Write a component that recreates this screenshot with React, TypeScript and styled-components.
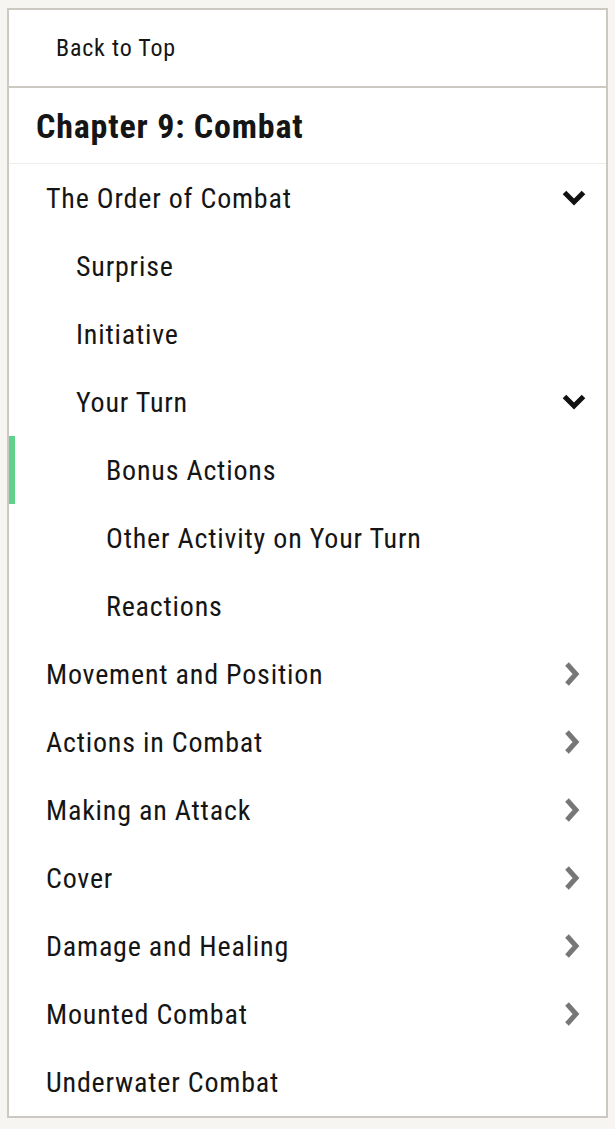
import styled, { createGlobalStyle } from 'styled-components'

const GlobalStyle = createGlobalStyle`
  html, body {
    margin: 0;
    padding: 0;
    background: #f7f5f1;
  }
  body {
    font-family: Roboto, "Liberation Sans", sans-serif;
    font-stretch: condensed;
    letter-spacing: 0.8px;
    color: #151515;
  }
`

type Item = {
  label: string
  level: number
  icon?: 'open' | 'closed'
  active?: boolean
}

const items: Item[] = [
  { label: 'The Order of Combat', level: 1, icon: 'open' },
  { label: 'Surprise', level: 2 },
  { label: 'Initiative', level: 2 },
  { label: 'Your Turn', level: 2, icon: 'open' },
  { label: 'Bonus Actions', level: 3, active: true },
  { label: 'Other Activity on Your Turn', level: 3 },
  { label: 'Reactions', level: 3 },
  { label: 'Movement and Position', level: 1, icon: 'closed' },
  { label: 'Actions in Combat', level: 1, icon: 'closed' },
  { label: 'Making an Attack', level: 1, icon: 'closed' },
  { label: 'Cover', level: 1, icon: 'closed' },
  { label: 'Damage and Healing', level: 1, icon: 'closed' },
  { label: 'Mounted Combat', level: 1, icon: 'closed' },
  { label: 'Underwater Combat', level: 1 },
]

const Page = styled.div`
  padding: 8px 7px 9px 7px;
`

const Panel = styled.nav`
  width: 597px;
  background: #fff;
  border: 2px solid #ccc8c2;
  display: flex;
  flex-direction: column;
`

const BackToTop = styled.a`
  display: flex;
  align-items: center;
  height: 76px;
  padding-left: 47px;
  font-size: 24px;
  color: #151515;
  text-decoration: none;
  border-bottom: 2px solid #ccc8c2;
`

const Heading = styled.h2`
  margin: 0 0 0 1px;
  height: 75px;
  display: flex;
  align-items: center;
  padding-left: 26px;
  font-size: 34px;
  font-weight: 700;
  letter-spacing: 0.8px;
  border-bottom: 1px solid #f0eeeb;
`

const List = styled.ul`
  list-style: none;
  margin: 0;
  padding: 0;
`

const Row = styled.li<{ $level: number; $active?: boolean }>`
  position: relative;
  height: 68px;
  display: flex;
  align-items: center;
  justify-content: space-between;
  padding-left: ${({ $level }) => 7 + $level * 30}px;
  padding-right: 20px;
  font-size: 28px;
  ${({ $active }) =>
    $active &&
    `
    &::before {
      content: '';
      position: absolute;
      left: 0;
      top: 0;
      bottom: 0;
      width: 6px;
      background: #5fd28c;
    }
  `}
`

const Chevron = styled.svg<{ $closed?: boolean }>`
  width: 24px;
  height: 24px;
  flex: none;
  fill: none;
  stroke: ${({ $closed }) => ($closed ? '#777' : '#111')};
  stroke-width: 5;
  stroke-linejoin: miter;
  stroke-miterlimit: 4;
`

const ChevronDown = () => (
  <Chevron viewBox="0 0 24 24">
    <polyline points="2.5,6.5 12,16 21.5,6.5" />
  </Chevron>
)

const ChevronRight = () => (
  <Chevron viewBox="0 0 24 24" $closed>
    <polyline points="5,2 14,12 5,22" />
  </Chevron>
)

export default function App() {
  return (
    <Page>
      <GlobalStyle />
      <Panel>
        <BackToTop href="#">Back to Top</BackToTop>
        <Heading>Chapter 9: Combat</Heading>
        <List>
          {items.map((it) => (
            <Row key={it.label} $level={it.level} $active={it.active}>
              <span>{it.label}</span>
              {it.icon === 'open' && <ChevronDown />}
              {it.icon === 'closed' && <ChevronRight />}
            </Row>
          ))}
        </List>
      </Panel>
    </Page>
  )
}
